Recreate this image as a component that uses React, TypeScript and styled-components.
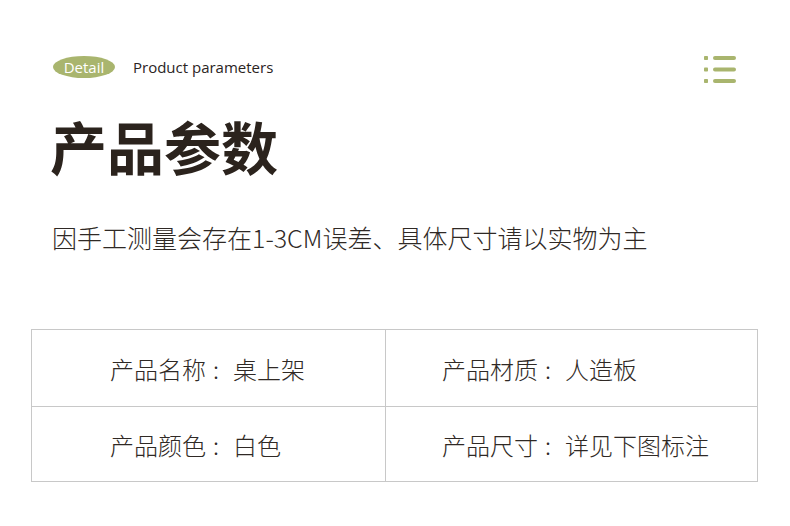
import styled, { createGlobalStyle } from 'styled-components'

const GlobalStyle = createGlobalStyle`
  body {
    margin: 0;
    background: #ffffff;
    font-family: "Noto Sans CJK SC", "Noto Sans", sans-serif;
  }
`

const Page = styled.main`
  width: 790px;
  height: 526px;
  box-sizing: border-box;
  padding: 56px 32px 0 31px;
  color: #2b241e;
`

const Header = styled.header`
  display: flex;
  align-items: flex-start;
  justify-content: space-between;
  padding: 0 22px;
  height: 28px;
`

const Lead = styled.div`
  display: flex;
  align-items: center;
  gap: 18px;
  height: 22px;
`

const Pill = styled.span`
  display: inline-flex;
  align-items: center;
  justify-content: center;
  width: 62px;
  height: 22px;
  border-radius: 50%;
  background: #a9b56e;
  color: #ffffff;
  font-family: "Open Sans", sans-serif;
  font-size: 15px;
`

const Caption = styled.span`
  font-family: "Open Sans", sans-serif;
  font-size: 15px;
  color: #2b241e;
`

const Title = styled.h1`
  margin: 26px 0 0 19px;
  font-size: 57px;
  line-height: 70px;
  font-weight: 700;
  color: #2b231d;
`

const Note = styled.p`
  margin: 40px 0 0 21px;
  font-size: 25px;
  line-height: 34px;
  font-weight: 300;
  color: #2f2925;
`

const Table = styled.div`
  margin-top: 75px;
  display: grid;
  grid-template-columns: 353px 1fr;
  border: 1px solid #c8c8c8;
`

const Cell = styled.div<{ $inset: number; $top?: boolean; $left?: boolean }>`
  display: flex;
  align-items: center;
  height: ${({ $top }) => ($top ? '76px' : '74px')};
  padding-left: ${({ $inset }) => $inset}px;
  border-left: ${({ $left }) => ($left ? 'none' : '1px solid #c8c8c8')};
  border-bottom: ${({ $top }) => ($top ? '1px solid #c8c8c8' : 'none')};
  font-size: 24px;
  font-weight: 300;
  color: #2f2925;
`

const Sep = styled.span`
  margin: 0 14px 0 7px;
`

function MenuIcon () {
  return (
    <svg width='32' height='28' viewBox='0 0 32 28' fill='#a9b56e'>
      <rect x='0' y='0' width='4' height='4' rx='0.8' />
      <rect x='0' y='11.5' width='4' height='4' rx='0.8' />
      <rect x='0' y='23' width='4' height='4' rx='0.8' />
      <rect x='9' y='0' width='23' height='4' rx='2' />
      <rect x='9' y='11.5' width='23' height='4' rx='2' />
      <rect x='9' y='23' width='23' height='4' rx='2' />
    </svg>
  )
}

const rows = [
  ['产品名称', '桌上架', '产品材质', '人造板'],
  ['产品颜色', '白色', '产品尺寸', '详见下图标注']
]

export default function App () {
  return (
    <>
      <GlobalStyle />
      <Page>
        <Header>
          <Lead>
            <Pill>Detail</Pill>
            <Caption>Product parameters</Caption>
          </Lead>
          <MenuIcon />
        </Header>

        <Title>产品参数</Title>

        <Note>因手工测量会存在1-3CM误差、具体尺寸请以实物为主</Note>

        <Table>
          {rows.map(([k1, v1, k2, v2], i) => [
            <Cell key={`${i}a`} $inset={78} $top={i === 0} $left>{k1}<Sep>:</Sep>{v1}</Cell>,
            <Cell key={`${i}b`} $inset={56} $top={i === 0}>{k2}<Sep>:</Sep>{v2}</Cell>
          ])}
        </Table>
      </Page>
    </>
  )
}
